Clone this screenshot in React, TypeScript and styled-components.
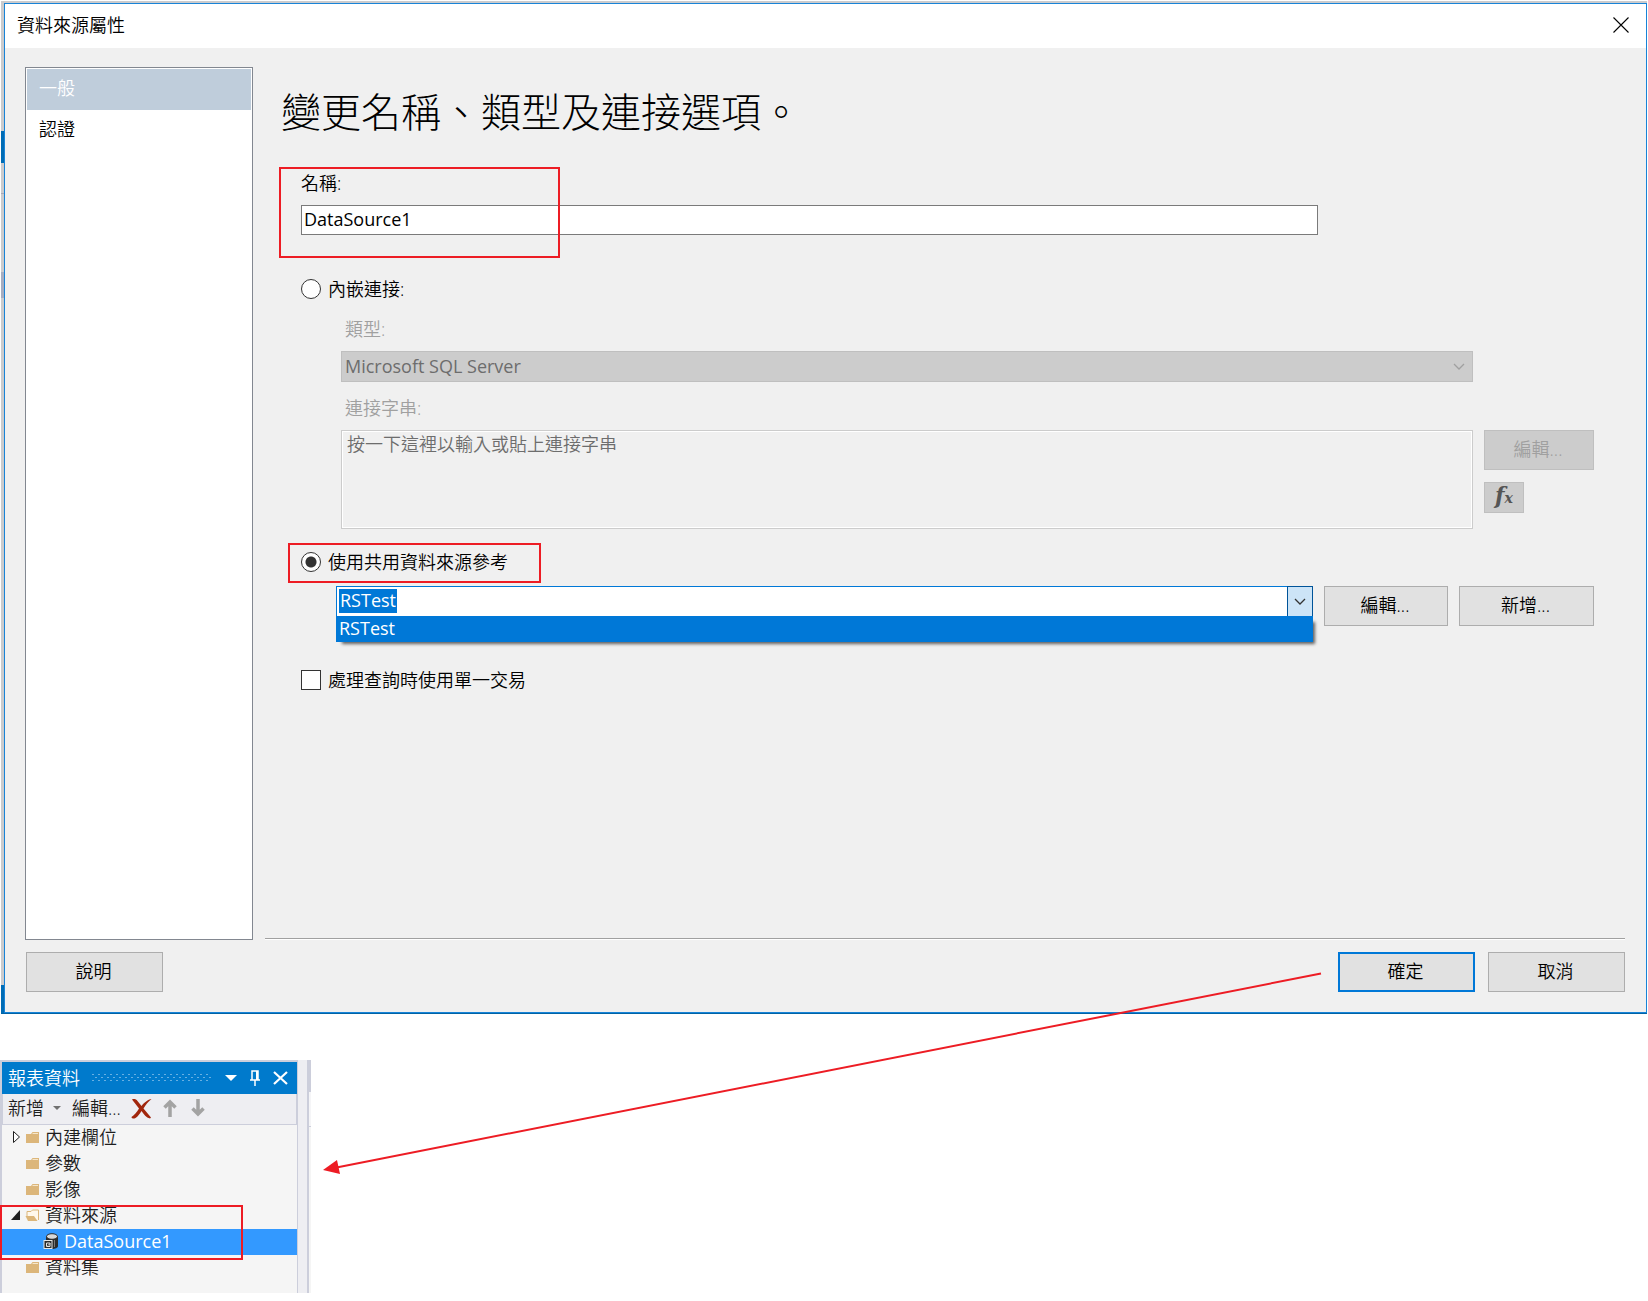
import React, { useState } from 'react';
import styled, { createGlobalStyle, css } from 'styled-components';

const fontStack = '"Open Sans", "Noto Sans CJK TC", sans-serif';
const accent = '#0078d7';
const mark = '#ed1c24';

const GlobalStyle = createGlobalStyle`
  *, *::before, *::after { box-sizing: border-box; }
  body { margin: 0; background: #fff; color: #000; font: 350 18px/24px ${fontStack}; }
  button, input, select, textarea { font: inherit; color: inherit; margin: 0; }
`;

const Page = styled.main`
  position: relative;
`;

const Backdrop = styled.div`
  margin: 1px 1px 0;
  padding: 2px 0 0 3px;
  border-bottom: 1px solid #0063a5;
  background:
    linear-gradient(#006cb5, #006cb5) 0 130px / 3px 32px no-repeat,
    linear-gradient(#a9a9b8, #a9a9b8) 0 192px / 3px 1px no-repeat,
    linear-gradient(#a6adc1, #a6adc1) 0 271px / 3px 26px no-repeat,
    linear-gradient(#006cb5, #006cb5) 0 100% / 3px 28px no-repeat,
    #cbcbcd;
`;

const Dialog = styled.section`
  border: 1px solid #1883d7;
  background: #f0f0f0;
`;

const DialogTitle = styled.header`
  display: flex;
  align-items: center;
  justify-content: space-between;
  height: 44px;
  padding: 0 17px 2px 12px;
  background: #fff;
`;

const IconButton = styled.button`
  display: flex;
  align-items: center;
  justify-content: center;
  padding: 0;
  border: 0;
  background: none;
`;

const DialogBody = styled.div`
  display: grid;
  grid-template-columns: 228px 1fr;
  column-gap: 12px;
  padding: 19px 21px 12px 20px;
`;

const SideList = styled.nav`
  display: flex;
  flex-direction: column;
  padding: 1px;
  border: 1px solid #828790;
  background: #fff;
`;

const SideItem = styled.button<{ $active?: boolean }>`
  height: 41px;
  padding: 0 12px 4px;
  border: 0;
  text-align: left;
  color: ${p => (p.$active ? '#fff' : '#000')};
  background: ${p => (p.$active ? '#bfcddb' : 'transparent')};
`;

const Content = styled.form`
  display: flex;
  flex-direction: column;
  min-height: 873px;
  padding: 20px 31px 0 36px;
  border-bottom: 1px solid #fff;
  box-shadow: inset 0 -1px 0 #a0a0a0;
`;

const Heading = styled.h1`
  margin: 0 0 34px -20px;
  font-size: 40px;
  line-height: 50px;
  font-weight: 300;
`;

const Marked = styled.div`
  position: relative;
`;

const Callout = styled.span<{ $box: [number, number, number, number] }>`
  position: absolute;
  left: ${p => p.$box[0]}px;
  top: ${p => p.$box[1]}px;
  width: ${p => p.$box[2]}px;
  height: ${p => p.$box[3]}px;
  border: 2px solid ${mark};
  pointer-events: none;
`;

const NameField = styled(Marked)`
  display: flex;
  flex-direction: column;
  gap: 10px;
  margin: 0 276px 42px 0;
`;

const NameInput = styled.input`
  height: 30px;
  padding: 0 2px 2px;
  border: 1px solid #7a7a7a;
  background: #fff;
  font-weight: 400;
`;

const Choice = styled.label`
  display: flex;
  align-items: center;
  gap: 7px;
  height: 24px;
`;

const tick = css`
  appearance: none;
  width: 20px;
  height: 20px;
  background: #fff;
`;

const Radio = styled.input`
  ${tick}
  border: 1px solid #333;
  border-radius: 50%;
  &:checked { background: radial-gradient(circle, #333 5px, #fff 6px); }
`;

const CheckBox = styled.input`
  ${tick}
  border: 1px solid #333;
  &:checked { background: #333; }
`;

const Embedded = styled.div`
  display: flex;
  flex-direction: column;
  margin: 16px 0 21px 40px;
`;

const DimLabel = styled.label`
  padding-left: 4px;
  margin-bottom: 10px;
  color: #a0a0a0;
`;

const SelectBox = styled.div`
  display: grid;
  grid-template-columns: 1fr 28px;
  align-items: center;
  margin: 0 121px 14px 0;
  > svg { grid-area: 1 / 2; justify-self: center; }
`;

const DimSelect = styled.select`
  appearance: none;
  grid-area: 1 / 1 / 2 / 3;
  height: 31px;
  padding: 0 3px 1px;
  border: 1px solid #bfbfbf;
  border-radius: 0;
  background: #ccc;
  color: #6d6d6d;
  opacity: 1;
  font-weight: 400;
`;

const Row = styled.div`
  display: flex;
  align-items: flex-start;
  gap: 11px;
`;

const ConnectionText = styled.textarea`
  flex: 1;
  height: 99px;
  padding: 1px 5px;
  border: 1px solid #ccc;
  box-shadow: inset 0 0 0 1px #fff;
  background: #f0f0f0;
  resize: none;
  &::placeholder { color: #6d6d6d; opacity: 1; }
`;

const SideButtons = styled.div`
  display: flex;
  flex-direction: column;
  align-items: flex-start;
  gap: 12px;
`;

const Button = styled.button<{ $width: number; $primary?: boolean }>`
  width: ${p => p.$width}px;
  height: 40px;
  padding: 0 2px 2px 0;
  border: ${p => (p.$primary ? `2px solid ${accent}` : '1px solid #adadad')};
  background: #e1e1e1;
  &:disabled { border-color: #bfbfbf; background: #ccc; color: #a0a0a0; }
`;

const FxButton = styled.button`
  width: 40px;
  height: 31px;
  padding: 0 0 5px;
  border: 1px solid #bfbfbf;
  background: #ccc;
  color: #555;
  font: italic bold 22px/24px "DejaVu Serif", serif;
  sub { font-size: 14px; line-height: 0; vertical-align: 0; }
`;

const SharedRow = styled(Row)`
  margin: 12px 0 42px 35px;
`;

const Combo = styled.div`
  position: relative;
  display: flex;
  flex: 1;
  height: 31px;
  border: 1px solid ${accent};
  border-right: 0;
  background: #fff;
  font-weight: 400;
`;

const ComboField = styled.div`
  display: flex;
  flex: 1;
  padding: 2px;
`;

const ComboInput = styled.input`
  field-sizing: content;
  height: 24px;
  padding: 0 1px 2px;
  border: 0;
  outline: 0;
  background: ${accent};
  color: #fff;
`;

const ComboArrow = styled(IconButton)`
  width: 26px;
  margin: -1px 0;
  border: 1px solid #005499;
  background: #cce4f7;
`;

const ComboList = styled.ul`
  position: absolute;
  top: 29px;
  left: -1px;
  right: 0;
  margin: 0;
  padding: 0;
  list-style: none;
  background: ${accent};
  color: #fff;
  box-shadow: 4px 4px 3px -2px rgba(0, 0, 0, 0.6);
  li { height: 26px; padding: 0 3px; }
`;

const Footer = styled.footer`
  display: flex;
  gap: 13px;
  padding: 0 21px 20px;
`;

const Spacer = styled.span`
  flex: 1;
`;

const Arrow = styled.svg`
  position: absolute;
  left: 322px;
  top: 970px;
  pointer-events: none;
`;

const Dock = styled.div`
  display: flex;
  width: 311px;
  height: 233px;
  margin-top: 46px;
`;

const Pane = styled.aside`
  display: flex;
  flex: 1;
  flex-direction: column;
  border: solid #cccedb;
  border-width: 2px 1px 0 2px;
  background: #f5f5f5;
`;

const Gutter = styled.div`
  width: 9px;
  background: #eeeef2;
`;

const DockEdge = styled.div`
  width: 4px;
  border-left: 2px solid #cccedb;
  background: linear-gradient(#cccedb 32px, #f5f5f7 32px, #f5f5f7 66px, #cccedb 66px, #cccedb 67px, #f5f5f5 67px);
`;

const PaneTitle = styled.header`
  display: flex;
  align-items: center;
  height: 32px;
  padding: 0 9px 1px 6px;
  background: #007acc;
  color: #fff;
`;

const Grip = styled.span`
  flex: 1;
  height: 9px;
  margin: 0 14px 0 12px;
  background:
    conic-gradient(from 270deg at 2px 1px, #68b0e2 90deg, transparent 0) 0 1px / 6px 6px,
    conic-gradient(from 270deg at 2px 1px, #68b0e2 90deg, transparent 0) 3px 4px / 6px 6px;
`;

const PaneTools = styled.div`
  display: flex;
  align-items: center;
  gap: 12px;
`;

const Toolbar = styled.div`
  display: flex;
  align-items: center;
  height: 31px;
  padding: 0 5px 2px;
  border: 1px solid #cccedb;
  border-width: 0 1px 1px;
  background: #eeeef2;
  color: #1e1e1e;
`;

const ToolButton = styled(IconButton)<{ $after: number }>`
  gap: 9px;
  margin-right: ${p => p.$after}px;
`;

const Tree = styled.ul`
  margin: 0;
  padding: 0;
  list-style: none;
  color: #1e1e1e;
`;

const TreeRow = styled.div<{ $level?: number; $selected?: boolean }>`
  display: flex;
  align-items: center;
  height: 26px;
  padding: 0 0 3px ${p => (p.$level ? 41 : 8)}px;
  gap: ${p => (p.$level ? 5 : 4)}px;
  font-weight: ${p => (p.$selected ? 400 : 350)};
  color: ${p => (p.$selected ? '#fff' : 'inherit')};
  background: ${p => (p.$selected ? '#3399ff' : 'transparent')};
`;

const MarkedItem = styled.li`
  position: relative;
`;

const Chevron = ({ color }: { color: string }) => (
  <svg width="12" height="8" viewBox="0 0 12 8" fill="none" stroke={color} strokeWidth="1.3">
    <path d="M1 1l5 5 5-5" />
  </svg>
);

const Expander = ({ state }: { state?: 'open' | 'closed' }) => (
  <svg width="11" height="14" viewBox="0 0 11 14">
    {state === 'closed' && <path d="M3.500 1.500v11l6-5.500z" fill="#fff" stroke="#1e1e1e" />}
    {state === 'open' && <path d="M10 2v10H1z" fill="#1e1e1e" />}
  </svg>
);

const Folder = ({ open }: { open?: boolean }) => (
  <svg width="16" height="14" viewBox="1 0 16 14">
    {open ? (
      <>
        <path d="M3 9V3.500h4L8.500 2H14.500v10" fill="#fff8ec" stroke="#dcb67a" />
        <path d="M1.500 8h8.500l3.500 5H4z" fill="#dcb67a" />
      </>
    ) : (
      <>
        <path d="M2 13V4h5l1.500-2H15v11z" fill="#dcb67a" />
        <path d="M8.500 3.500H14" stroke="#f5e6cb" />
      </>
    )}
  </svg>
);

const SourceIcon = () => (
  <svg width="16" height="18" viewBox="0 0 16 18">
    <path d="M3 4v10c0 4 12 4 12 0V4z" fill="#2b2b2b" />
    <ellipse cx="9" cy="4.500" rx="5.500" ry="2.800" fill="#d8d8d8" stroke="#2b2b2b" />
    <path d="M11.500 8v7" stroke="#777" />
    <rect x="1" y="8.500" width="8" height="8" fill="#2b2b2b" stroke="#e6e6e6" />
    <path d="M3.500 11h3.500v3.500H3.500z" fill="none" stroke="#e6e6e6" />
    <path d="M5 13.500l2-2" stroke="#e6e6e6" />
  </svg>
);

export default function App() {
  const [name, setName] = useState('DataSource1');
  const [source, setSource] = useState('RSTest');
  const [mode, setMode] = useState('shared');

  return (
    <Page lang="zh-Hant">
      <GlobalStyle />
      <Backdrop>
        <Dialog role="dialog" aria-labelledby="dialog-title">
          <DialogTitle>
            <span id="dialog-title">資料來源屬性</span>
            <IconButton aria-label="關閉">
              <svg width="16" height="16" viewBox="0 0 16 16" stroke="#000" strokeWidth="1.100">
                <path d="M.5 .5l15 15M15.500 .5l-15 15" />
              </svg>
            </IconButton>
          </DialogTitle>
          <DialogBody>
            <SideList>
              <SideItem $active>一般</SideItem>
              <SideItem>認證</SideItem>
            </SideList>
            <Content onSubmit={e => e.preventDefault()}>
              <Heading>變更名稱、類型及連接選項。</Heading>
              <NameField>
                <label htmlFor="name">名稱:</label>
                <NameInput id="name" value={name} onChange={e => setName(e.target.value)} />
                <Callout $box={[-22, -4, 281, 91]} />
              </NameField>
              <Choice>
                <Radio type="radio" name="mode" checked={mode === 'embedded'} onChange={() => setMode('embedded')} />
                內嵌連接:
              </Choice>
              <Embedded>
                <DimLabel htmlFor="type">類型:</DimLabel>
                <SelectBox>
                  <DimSelect id="type" disabled>
                    <option>Microsoft SQL Server</option>
                  </DimSelect>
                  <Chevron color="#a0a0a0" />
                </SelectBox>
                <DimLabel htmlFor="connection">連接字串:</DimLabel>
                <Row>
                  <ConnectionText id="connection" disabled placeholder="按一下這裡以輸入或貼上連接字串" />
                  <SideButtons>
                    <Button type="button" $width={110} disabled>編輯...</Button>
                    <FxButton type="button" disabled>f<sub>x</sub></FxButton>
                  </SideButtons>
                </Row>
              </Embedded>
              <Marked>
                <Choice>
                  <Radio type="radio" name="mode" checked={mode === 'shared'} onChange={() => setMode('shared')} />
                  使用共用資料來源參考
                </Choice>
                <Callout $box={[-13, -7, 253, 40]} />
              </Marked>
              <SharedRow>
                <Combo>
                  <ComboField>
                    <ComboInput aria-label="共用資料來源" value={source} onChange={e => setSource(e.target.value)} />
                  </ComboField>
                  <ComboArrow type="button" aria-label="展開">
                    <Chevron color="#333" />
                  </ComboArrow>
                  <ComboList role="listbox">
                    <li role="option" aria-selected="true">RSTest</li>
                  </ComboList>
                </Combo>
                <Button type="button" $width={124}>編輯...</Button>
                <Button type="button" $width={135}>新增...</Button>
              </SharedRow>
              <Choice>
                <CheckBox type="checkbox" />
                處理查詢時使用單一交易
              </Choice>
            </Content>
          </DialogBody>
          <Footer>
            <Button $width={137}>說明</Button>
            <Spacer />
            <Button $width={137} $primary>確定</Button>
            <Button $width={137}>取消</Button>
          </Footer>
        </Dialog>
      </Backdrop>

      <Dock>
        <Pane>
          <PaneTitle>
            報表資料
            <Grip />
            <PaneTools>
              <IconButton aria-label="選項">
                <svg width="12" height="6" viewBox="0 0 12 6"><path d="M0 0h12L6 6z" fill="#fff" /></svg>
              </IconButton>
              <IconButton aria-label="釘選">
                <svg width="12" height="16" viewBox="0 0 12 16" fill="none" stroke="#fff" strokeWidth="1.500">
                  <path d="M3 10V1h6v9M1 10h10M6 10v6" />
                  <path d="M8 1v9" strokeWidth="2" />
                </svg>
              </IconButton>
              <IconButton aria-label="關閉窗格">
                <svg width="15" height="14" viewBox="0 0 15 14" stroke="#fff" strokeWidth="2.200">
                  <path d="M1 1l13 12M14 1L1 13" />
                </svg>
              </IconButton>
            </PaneTools>
          </PaneTitle>
          <Toolbar>
            <ToolButton $after={11}>
              新增
              <svg width="8" height="4" viewBox="0 0 8 4"><path d="M0 0h8L4 4z" fill="#717171" /></svg>
            </ToolButton>
            <ToolButton $after={9}>編輯...</ToolButton>
            <ToolButton $after={10} aria-label="刪除">
              <svg width="23" height="21" viewBox="0 0 23 21">
                <path d="M2 1.500C4 .5 6 1 7.500 3l4 5C14 4.500 18 1.500 21.500 1 18 4 15.500 7 13.500 10.500l7.500 9-1 1c-4-1-6-4-8.500-7.500-2 3-3.500 5.500-6 7-2 1-4 .5-4-1 3-2 5.500-5 7.500-8.500z" fill="#a1260d" />
              </svg>
            </ToolButton>
            <ToolButton $after={14} aria-label="上移">
              <svg width="14" height="18" viewBox="0 0 14 18" fill="none" stroke="#a3a3a3" strokeWidth="3.500">
                <path d="M1.500 8.500L7 3l5.500 5.500M7 4v14" />
              </svg>
            </ToolButton>
            <ToolButton $after={0} aria-label="下移">
              <svg width="14" height="18" viewBox="0 0 14 18" fill="none" stroke="#a3a3a3" strokeWidth="3.500">
                <path d="M1.500 9.500L7 15l5.500-5.500M7 14V0" />
              </svg>
            </ToolButton>
          </Toolbar>
          <Tree>
            <li><TreeRow><Expander state="closed" /><Folder />內建欄位</TreeRow></li>
            <li><TreeRow><Expander /><Folder />參數</TreeRow></li>
            <li><TreeRow><Expander /><Folder />影像</TreeRow></li>
            <MarkedItem>
              <TreeRow><Expander state="open" /><Folder open />資料來源</TreeRow>
              <TreeRow $level={1} $selected><SourceIcon />DataSource1</TreeRow>
              <Callout $box={[-2, 2, 243, 55]} />
            </MarkedItem>
            <li><TreeRow><Expander /><Folder />資料集</TreeRow></li>
          </Tree>
        </Pane>
        <Gutter />
        <DockEdge />
      </Dock>

      <Arrow width="1000" height="206" viewBox="0 0 1000 206" aria-hidden="true">
        <path d="M999 2.500L12 197" stroke={mark} strokeWidth="2" />
        <path d="M1 199l14-10 3 14z" fill={mark} />
      </Arrow>
    </Page>
  );
}
